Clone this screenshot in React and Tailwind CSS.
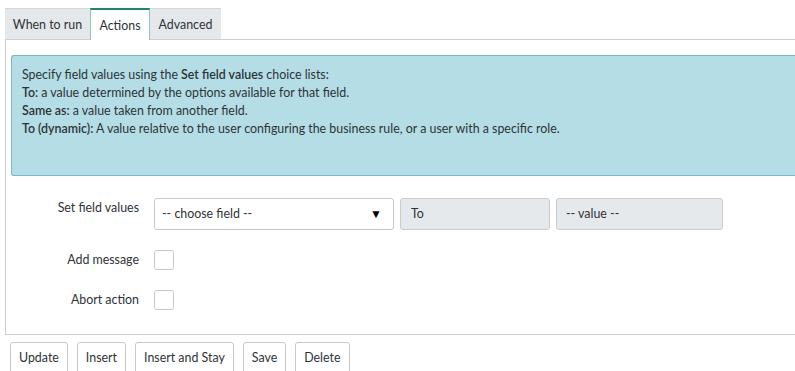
export default function App() {
  return (
    <div className="w-[795px] h-[371px] overflow-hidden bg-white text-[12.4px] text-[#2e3338] font-['Lato','Liberation_Sans',sans-serif]">
      {/* Tabs */}
      <div className="flex pt-2 pl-[5px] h-[39px]">
        <div className="w-[85px] h-[31px] flex items-center justify-center pt-[3px] bg-[#e5e8eb] border-t border-[#d2d6da]">When to run</div>
        <div className="w-[60px] h-[32px] flex items-center justify-center pt-[2px] bg-white border-t-2 border-t-[#1f8476] border-x border-x-[#8fc4bc] -mb-px relative z-10">Actions</div>
        <div className="w-[71px] h-[31px] flex items-center justify-center pt-[3px] bg-[#e5e8eb] border-t border-[#d2d6da]">Advanced</div>
      </div>
      {/* Panel */}
      <div className="ml-[5px] h-[296px] border-l border-t border-b border-[#cfcfcf] pt-[15px]">
        <div className="ml-[5px] h-[121px] bg-[#b4dde5] border border-r-0 border-[#74b9c8] rounded-l-[3px] pl-[10px] pt-[10px] leading-[18px]">
          <div>Specify field values using the <b className="font-semibold">Set field values</b> choice lists:</div>
          <div><b className="font-semibold">To:</b> a value determined by the options available for that field.</div>
          <div><b className="font-semibold">Same as:</b> a value taken from another field.</div>
          <div><b className="font-semibold">To (dynamic):</b> A value relative to the user configuring the business rule, or a user with a specific role.</div>
        </div>
        <div className="pt-[22px] flex flex-col">
          <div className="flex items-start h-[32px]">
            <div className="w-[133px] text-right pt-[1px]">Set field values</div>
            <div className="ml-[15px] w-[240px] h-[32px] border border-[#c8c8c8] rounded-[3px] bg-white flex items-center justify-between pl-[7px] pr-[11px]">
              <span>-- choose field --</span>
              <span className="text-[12px] text-black">▼</span>
            </div>
            <div className="ml-[6px] w-[150px] h-[32px] border border-[#cbcbcb] rounded-[3px] bg-[#e6e9ec] flex items-center pl-[10px]">To</div>
            <div className="ml-[6px] w-[167px] h-[32px] border border-[#cbcbcb] rounded-[3px] bg-[#e6e9ec] flex items-center pl-[9px]">-- value --</div>
          </div>
          <div className="flex items-center h-[20px] mt-[20px]">
            <div className="w-[133px] text-right">Add message</div>
            <div className="ml-[15px] w-[20px] h-[20px] border border-[#c8c8c8] rounded-[3px] bg-white"></div>
          </div>
          <div className="flex items-center h-[20px] mt-[20px]">
            <div className="w-[133px] text-right">Abort action</div>
            <div className="ml-[15px] w-[20px] h-[20px] border border-[#c8c8c8] rounded-[3px] bg-white"></div>
          </div>
        </div>
      </div>
      {/* Buttons */}
      <div className="flex gap-[9px] pl-[10px] pt-[7px]">
        {["Update", "Insert", "Insert and Stay", "Save", "Delete"].map((b) => (
          <div key={b} className="h-[34px] px-[8px] pt-[6px] border border-[#c8c8c8] rounded-t-[3px] bg-white">{b}</div>
        ))}
      </div>
    </div>
  );
}
